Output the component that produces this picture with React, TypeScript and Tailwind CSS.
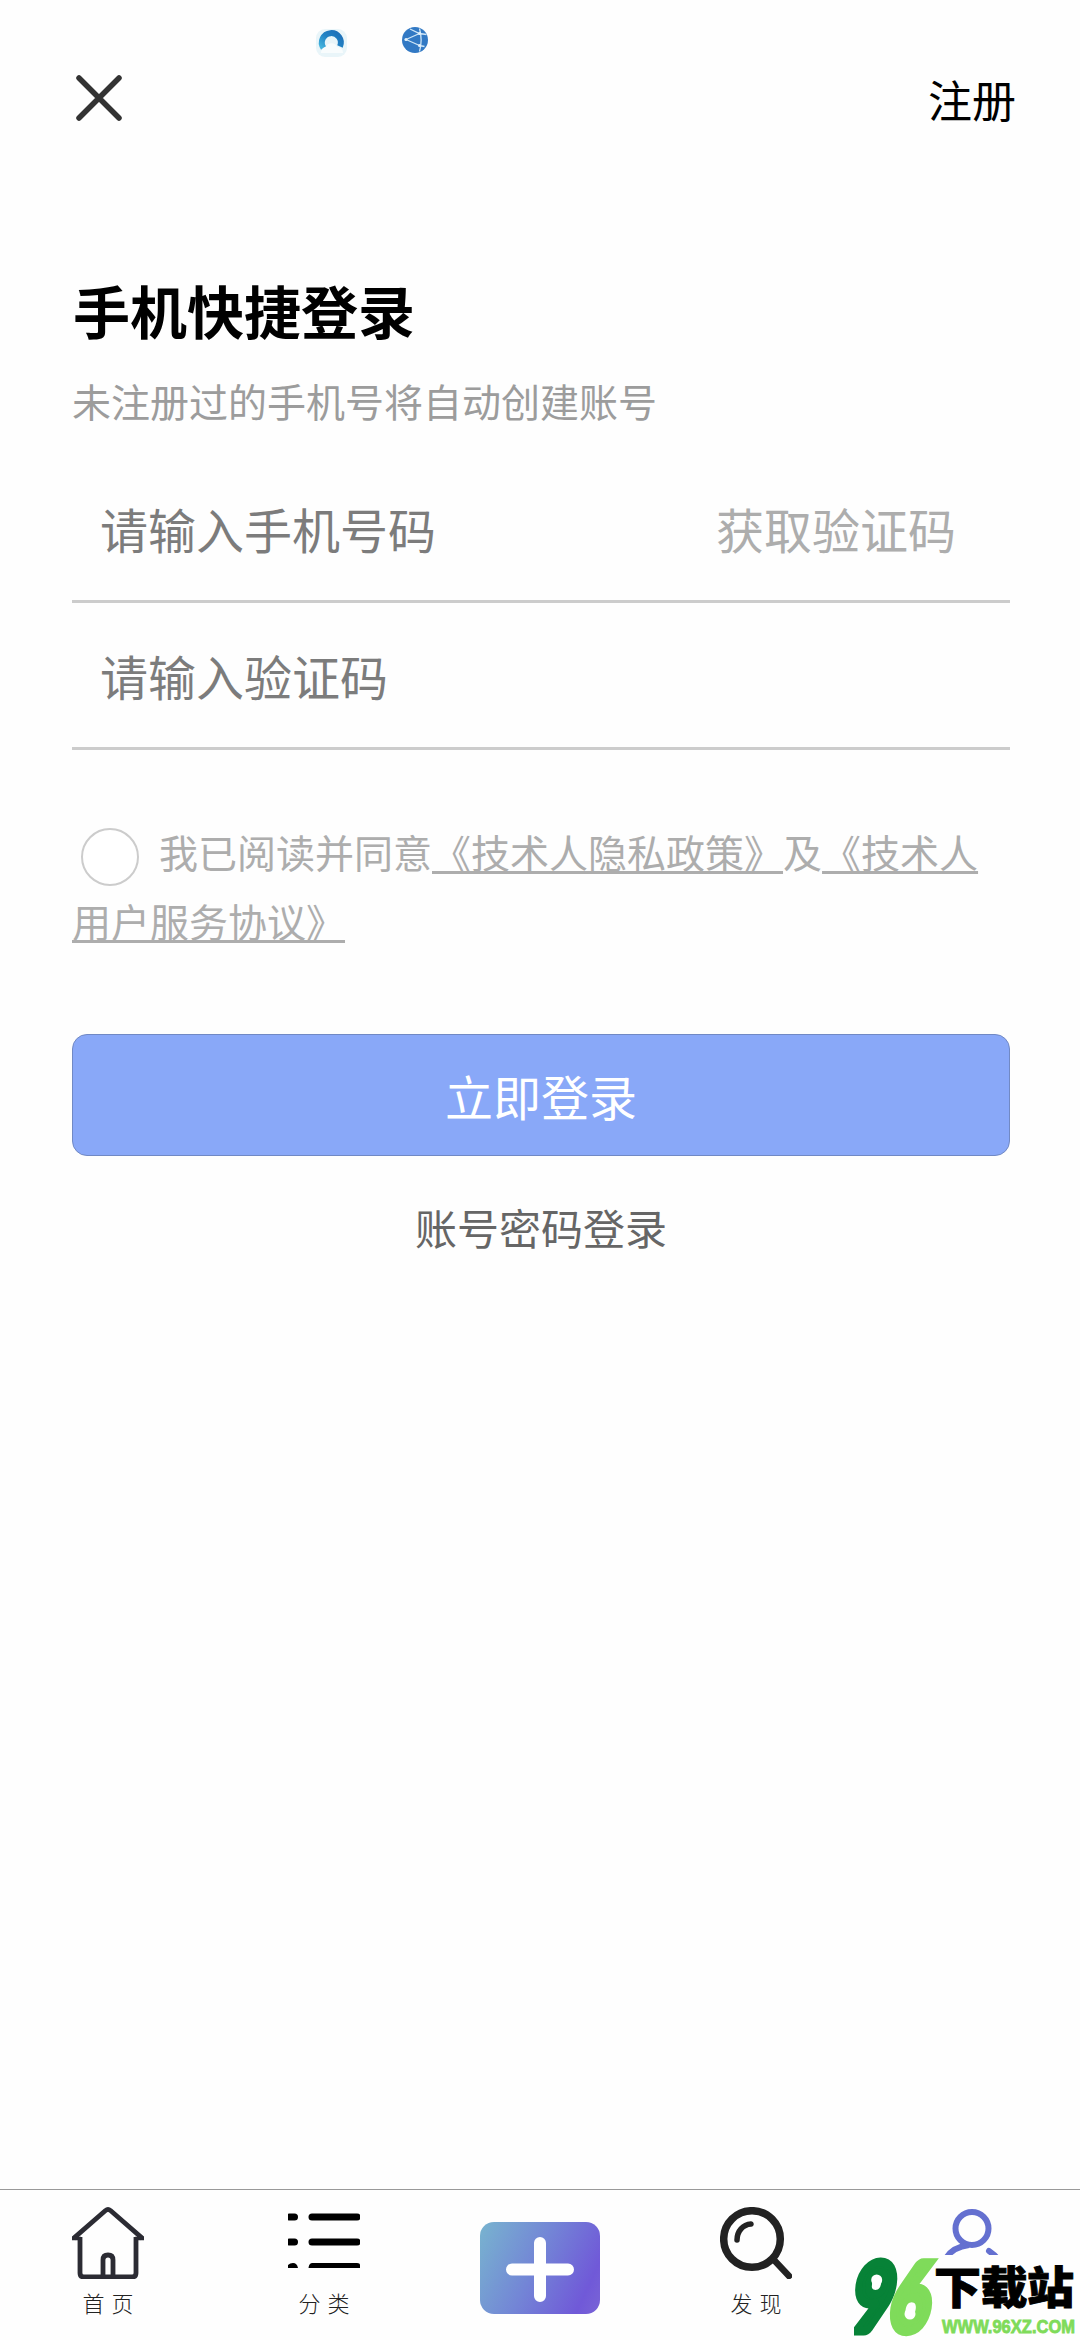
import React, { useState } from 'react';

const tabs = [
  { key: 'home', label: '首页', icon: <HomeIcon /> },
  { key: 'category', label: '分类', icon: <ListIcon /> },
  { key: 'publish', label: '', icon: <PlusIcon /> },
  { key: 'discover', label: '发现', icon: <SearchIcon /> },
  { key: 'mine', label: '', icon: <UserIcon /> },
];

function BrowserIcon() {
  return (
    <svg width="40" height="40" viewBox="0 0 40 40" fill="none">
      <defs>
        <linearGradient id="ring" x1="0" y1="1" x2="1" y2="0">
          <stop offset="0" stopColor="#45b4de" />
          <stop offset="0.5" stopColor="#2183c4" />
          <stop offset="1" stopColor="#1f6fb8" />
        </linearGradient>
      </defs>
      <rect x="5" y="9" width="31" height="28" rx="9" fill="#e9f5f9" />
      <path d="M12.500 28a9.500 9.500 0 1 1 16.500 -1.500" stroke="url(#ring)" strokeWidth="6" />
      <path d="M10 33c0-4 3-6 5-6 1-5 10-5 11 0 4 0 6 3 6 6z" fill="#f8fcfd" />
    </svg>
  );
}

function GlobeIcon() {
  return (
    <svg width="28" height="28" viewBox="0 0 28 28" fill="none">
      <circle cx="14" cy="14" r="13" fill="#3279c4" />
      <path d="M5 13.500l13.500-6M5 13.500l13.500 6M18.500 2.500c2 7 2 16 0 23M9 3l9.500 4.500 7 1M18.500 19.500l5 1" stroke="#cfe6f7" strokeWidth="1.300" />
      <circle cx="18.500" cy="7.500" r="1.500" fill="#e4f2fb" />
      <circle cx="5" cy="13.500" r="1.600" fill="#e4f2fb" />
      <circle cx="18.500" cy="19.500" r="1.500" fill="#e4f2fb" />
    </svg>
  );
}

function HomeIcon() {
  return (
    <svg width="72" height="72" viewBox="0 0 72 72" fill="none" stroke="#2b2b33" strokeWidth="4.800">
      <path d="M1.500 31.500L33.500 3.500q2.500-2 5 0L70.500 31.500" />
      <path d="M0 31.500h9M63 31.500h9" strokeWidth="3.500" />
      <path d="M8 30v36q0 4 4 4h48q4 0 4-4V30" />
      <path d="M31 70V53q0-5 5-5t5 5v17" />
    </svg>
  );
}

function ListIcon() {
  return (
    <svg width="72" height="56" viewBox="0 0 72 56" fill="#000">
      <rect x="-2" y="0.500" width="12" height="7" rx="3.500" />
      <rect x="20.500" y="0.500" width="52" height="7" rx="3.500" />
      <rect x="-2" y="25.500" width="12" height="7" rx="3.500" />
      <rect x="20.500" y="25.500" width="52" height="7" rx="3.500" />
      <path d="M0 55v-3q2-2 5-2 4 0 5 5z" />
      <path d="M20.500 55q.5-5 4-5H69q3 0 3 2v3z" />
    </svg>
  );
}

function PlusIcon() {
  return (
    <div className="w-[120px] h-[92px] rounded-[14px] bg-[linear-gradient(115deg,#78b4cf_0%,#7386d6_45%,#7059d8_85%,#7a64d6_100%)]">
      <svg width="120" height="92" viewBox="0 0 120 92" stroke="#fff" strokeWidth="12" strokeLinecap="round">
        <path d="M60 21v53M32 47.500h56" />
      </svg>
    </div>
  );
}

function SearchIcon() {
  return (
    <svg width="72" height="72" viewBox="0 0 72 72" fill="none" stroke="#222" strokeLinecap="round">
      <circle cx="32" cy="32" r="28.300" strokeWidth="7.500" />
      <path d="M17 33c0-9 6-15.500 14-16" strokeWidth="5.500" />
      <path d="M54 53l15 16" strokeWidth="6.500" />
    </svg>
  );
}

function UserIcon() {
  return (
    <svg width="72" height="72" viewBox="0 0 72 72" fill="none" stroke="#6470d0" strokeWidth="6">
      <circle cx="36" cy="21.500" r="16.500" />
      <path d="M10 51q7-11 23-13" />
      <path d="M53 44q6 4 10 9" strokeLinecap="round" />
    </svg>
  );
}

// Site badge in the bottom right corner, it covers part of the last tab
function SiteBadge() {
  return (
    <div className="absolute right-0 bottom-0 w-[226px] h-[85px] bg-[#fefefe]">
      <svg width="226" height="85" viewBox="0 0 226 85">
        <g fontFamily="Lato, sans-serif" fontWeight="900" fontSize="94" strokeWidth="9">
          <text transform="translate(-5 75.500) skewX(-9) scale(0.74 1)" fill="#078237" stroke="#078237">9</text>
          <text transform="translate(33.500 75.500) skewX(-9) scale(0.72 1)" fill="#7fdb5a" stroke="#7fdb5a">6</text>
        </g>
        <circle cx="22.700" cy="25" r="5.500" fill="#fff" />
        <circle cx="56" cy="59" r="5.500" fill="#fff" />
        <text transform="translate(80 48.500) scale(1 0.940)" fontFamily='"Noto Sans CJK SC", sans-serif' fontWeight="900" fontSize="47" textLength="140" fill="#000" stroke="#000" strokeWidth="1">下载站</text>
        <text x="88" y="77.500" fontFamily='"Liberation Sans", sans-serif' fontWeight="700" fontSize="17.500" textLength="133" lengthAdjust="spacingAndGlyphs" fill="#7fdb5a" stroke="#7fdb5a" strokeWidth="0.800">WWW.96XZ.COM</text>
      </svg>
    </div>
  );
}

export default function App() {
  const [agreed, setAgreed] = useState(false);

  return (
    <div className="relative flex flex-col w-[1080px] h-[2340px] bg-[#fefefe] overflow-hidden font-['Noto_Sans_CJK_SC',sans-serif]">
      {/* Status bar */}
      <div className="flex items-center h-[60px] pt-[20px] pl-[311px] gap-[50px]">
        <BrowserIcon />
        <GlobeIcon />
      </div>

      {/* Header */}
      <header className="flex items-center justify-between h-[76px] pl-[75px] pr-[64px]">
        <button aria-label="关闭">
          <svg width="48" height="48" viewBox="0 0 48 48" stroke="#333" strokeWidth="5.500" strokeLinecap="round">
            <path d="M4 4l40 40M44 4L4 44" />
          </svg>
        </button>
        <button className="pt-0.5 text-[44px] leading-[60px] text-black">注册</button>
      </header>

      <main className="flex-1 pt-[143px] pl-[72px] pr-[70px]">
        <h1 className="pl-px text-[57px] leading-[60px] font-bold text-black">手机快捷登录</h1>
        <p className="mt-[41px] text-[39px] leading-[40px] text-[#9c9c9c]">未注册过的手机号将自动创建账号</p>

        <div className="flex items-center justify-between mt-[36px] h-[147px] pl-[28px] pr-[54px] border-b-3 border-[#ccc] text-5xl">
          <span className="text-[#7c7c7c]">请输入手机号码</span>
          <button className="text-[#adadad]">获取验证码</button>
        </div>
        <div className="flex items-center h-[147px] pl-[28px] border-b-3 border-[#ccc] text-5xl">
          <span className="text-[#7c7c7c]">请输入验证码</span>
        </div>

        <p className="mt-[67px] text-[39px] leading-[69px] text-[#adadad]">
          <button
            aria-label="同意"
            onClick={() => setAgreed(!agreed)}
            className={`inline-block w-[58px] h-[58px] ml-[9px] mr-[20px] -my-1 align-[-16px] rounded-full border-2 border-[#ccc] ${agreed ? 'bg-[#89a8f8]' : 'bg-white'}`}
          />
          我已阅读并同意
          <a className="underline decoration-3 underline-offset-3 [text-decoration-skip-ink:none]">《技术人隐私政策》</a>
          及
          <a className="underline decoration-3 underline-offset-3 [text-decoration-skip-ink:none]">《技术人用户服务协议》</a>
        </p>

        <button className="block w-full h-[122px] mt-[79px] rounded-[15px] border border-[#7189c4] bg-[#89a8f8] text-5xl text-white">
          立即登录
        </button>
        <button className="block mx-auto mt-[50px] text-[42px] leading-[42px] text-[#666]">账号密码登录</button>
      </main>

      {/* Bottom tabs */}
      <nav className="flex h-[151px] border-t border-[#999]">
        {tabs.map((tab) => (
          <div key={tab.key} className={`flex flex-1 flex-col items-center ${tab.key === 'publish' ? 'pt-[32px]' : 'pt-[17px]'}`}>
            <div className={tab.key === 'category' ? 'h-[72px] pt-[6px]' : 'h-[72px]'}>{tab.icon}</div>
            {tab.label && (
              <span className="mt-[9px] pl-[7px] text-[22px] leading-[28px] font-light tracking-[7px] text-[#222]">{tab.label}</span>
            )}
          </div>
        ))}
      </nav>

      <SiteBadge />
    </div>
  );
}
